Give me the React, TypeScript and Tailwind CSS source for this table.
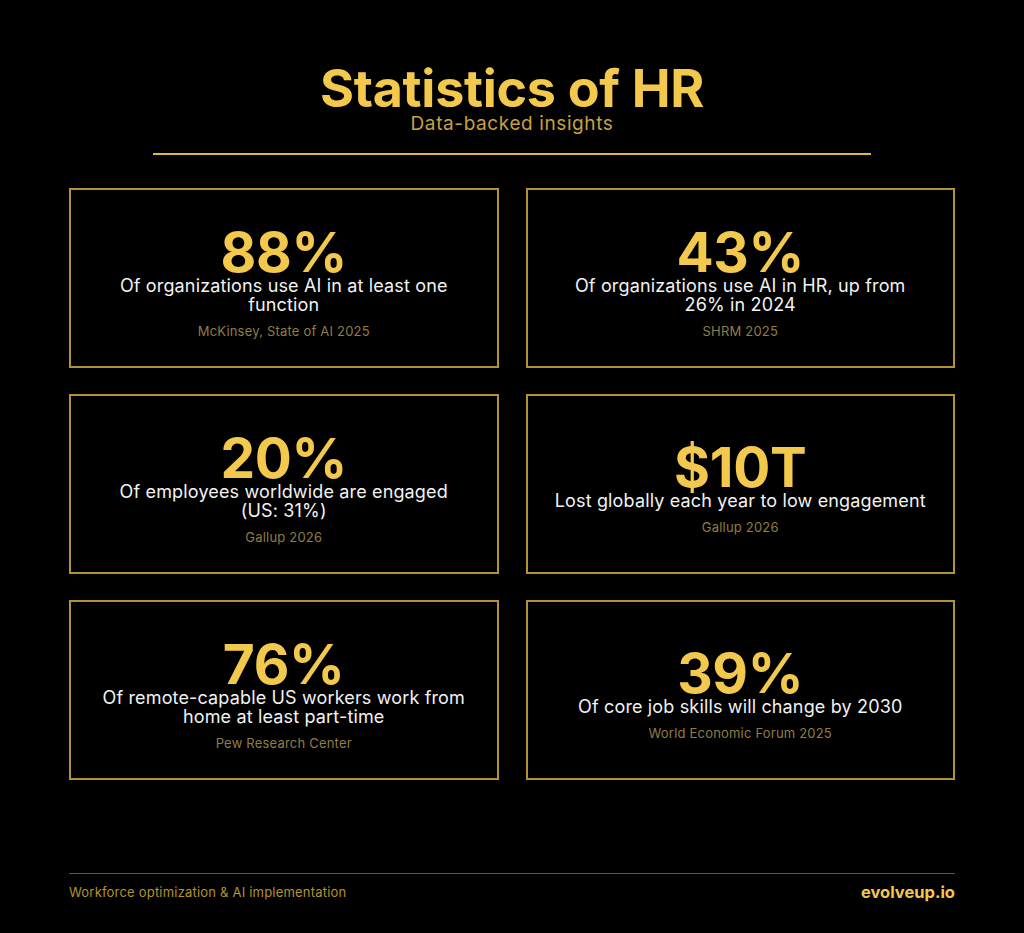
const stats = [
  { value: "88%", lines: ["Of organizations use AI in at least one", "function"], source: "McKinsey, State of AI 2025" },
  { value: "43%", lines: ["Of organizations use AI in HR, up from", "26% in 2024"], source: "SHRM 2025" },
  { value: "20%", lines: ["Of employees worldwide are engaged", "(US: 31%)"], source: "Gallup 2026" },
  { value: "$10T", lines: ["Lost globally each year to low engagement"], source: "Gallup 2026" },
  { value: "76%", lines: ["Of remote-capable US workers work from", "home at least part-time"], source: "Pew Research Center" },
  { value: "39%", lines: ["Of core job skills will change by 2030"], source: "World Economic Forum 2025" },
]

function StatCard({ value, lines, source }: { value: string; lines: string[]; source: string }) {
  return (
    <div className="h-[180px] border-2 border-[#b3932f] flex flex-col items-center justify-center text-center px-[20px] pt-[12px]">
      <div className="text-[55px] font-bold leading-[44px] text-[#f2c94c] tracking-[-0.3px]">{value}</div>
      <div className="mt-[2px] text-[18px] leading-[19px] tracking-[0.15px] text-[#f2f2f2]">
        {lines.map((l) => (
          <div key={l} className="whitespace-nowrap">{l}</div>
        ))}
      </div>
      <div className="mt-[9px] text-[13px] leading-[16px] tracking-[0.2px] text-[#8f7d44]">{source}</div>
    </div>
  )
}

export default function App() {
  return (
    <div className="w-[1024px] h-[933px] bg-black flex flex-col" style={{ fontFamily: "Inter, 'Noto Sans', sans-serif" }}>
      <div className="flex flex-col items-center pt-[62px]">
        <h1 className="text-[52px] font-bold leading-[54px] text-[#f2c94c] tracking-[-0.3px]">Statistics of HR</h1>
        <div className="text-[19px] leading-[22px] tracking-[0.6px] text-[#c6a23b] -mt-[3px]">Data-backed insights</div>
        <div className="mt-[18px] w-[718px] h-[2px] bg-[#e0b93f]" />
      </div>

      <div className="mx-[69px] mt-[33px] grid grid-cols-2 gap-x-[27px] gap-y-[26px]">
        {stats.map((s) => (
          <StatCard key={s.value} {...s} />
        ))}
      </div>

      <div className="mx-[69px] mt-[93px] border-t border-[#6b5a24] pt-[6px] flex items-center justify-between">
        <span className="text-[13px] tracking-[0.2px] text-[#b3932f]">Workforce optimization &amp; AI implementation</span>
        <span className="text-[16.5px] font-bold text-[#f2c94c]">evolveup.io</span>
      </div>
    </div>
  )
}
